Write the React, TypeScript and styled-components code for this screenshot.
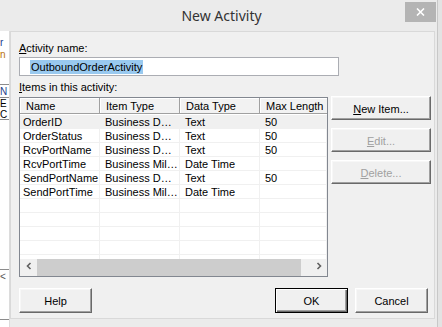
import React from 'react'
import styled, { createGlobalStyle } from 'styled-components'

const GlobalStyle = createGlobalStyle`
  html, body {
    margin: 0;
    padding: 0;
  }
  body {
    background: #ebebeb;
    font-family: "Liberation Sans", Arial, sans-serif;
    font-size: 11px;
    color: #000;
  }
  * {
    box-sizing: border-box;
  }
`

const Screen = styled.div`
  display: flex;
  width: 442px;
  height: 327px;
  overflow: hidden;
  background: #ebebeb;
`

const DialogColumn = styled.div`
  flex: 1;
  min-width: 0;
  display: flex;
  flex-direction: column;
`

// edge of the window lying behind the dialog
const OuterEdge = styled.div`
  flex: none;
  width: 5px;
  background: #e3e3e3;
  border-left: 1px solid #c8c8c8;
`

const TitleBar = styled.div`
  flex: none;
  height: 31px;
  display: grid;
  grid-template-columns: 1fr auto 1fr;
  align-items: center;
  padding: 0 1px 0 7px;
`

const Title = styled.div`
  grid-column: 2;
  font-family: "Noto Sans", "Open Sans", sans-serif;
  font-size: 14px;
  line-height: 19px;
  color: #333333;
`

const CloseButton = styled.div`
  grid-column: 3;
  justify-self: end;
  align-self: start;
  margin-top: 2px;
  width: 31px;
  height: 20px;
  background: #b4b4b4;
  display: flex;
  align-items: center;
  justify-content: center;
`

const Body = styled.div`
  flex: 1;
  min-height: 0;
  display: flex;
`

// the owner application peeking out at the left
const AppStrip = styled.div`
  flex: none;
  width: 10px;
  background: #ffffff;
  border-right: 1px solid #dcdcdc;
  display: flex;
  flex-direction: column;
  overflow: hidden;
`

const StripItem = styled.div<{ $h: number; $line?: boolean; $color?: string }>`
  flex: none;
  height: ${({ $h }) => $h}px;
  line-height: ${({ $h }) => $h}px;
  border-bottom: ${({ $line }) => ($line ? '1px solid #8c8c8c' : 'none')};
  color: ${({ $color }) => $color || '#000'};
  font-size: 10px;
  white-space: nowrap;
`

const Client = styled.div`
  flex: none;
  width: 425px;
  margin-bottom: 8px;
  border: 1px solid #d9d9d9;
  background: #f0f0f0;
  padding: 10px 3px 0 8px;
  display: flex;
  flex-direction: column;
`

const FieldLabel = styled.div<{ $top: number; $bottom: number }>`
  line-height: 13px;
  margin-top: ${({ $top }) => $top}px;
  margin-bottom: ${({ $bottom }) => $bottom}px;
`

const NameInput = styled.div`
  width: 320px;
  height: 19px;
  border: 1px solid #abadb3;
  background: #ffffff;
  padding-left: 10px;
  display: flex;
  align-items: center;
`

const Selection = styled.span`
  background: #99c9ef;
  line-height: 14px;
  padding: 0 1px;
`

const ItemsRow = styled.div`
  display: flex;
  align-items: flex-start;
`

const ListView = styled.div`
  width: 309px;
  height: 180px;
  border: 1px solid #828790;
  background: #ffffff;
  display: flex;
  flex-direction: column;
`

const columnTemplate = '80px 80px 80px 1fr'

const HeaderRow = styled.div`
  flex: none;
  height: 16px;
  display: grid;
  grid-template-columns: ${columnTemplate};
  background: #f2f2f2;
  border-bottom: 1px solid #a0a0a0;
`

const HeaderCell = styled.div`
  padding: 1px 0 0 6px;
  line-height: 14px;
  border-right: 1px solid #a0a0a0;
  box-shadow: inset 1px 0 #ffffff, inset 0 1px #ffffff;
  white-space: nowrap;
  overflow: hidden;
  &:last-child {
    border-right: none;
  }
`

const RowsArea = styled.div`
  flex: 1;
  min-height: 0;
  overflow: hidden;
  padding-top: 1px;
`

const Row = styled.div<{ $hot?: boolean }>`
  height: 14px;
  display: grid;
  grid-template-columns: ${columnTemplate};
  background: ${({ $hot }) => ($hot ? '#f0f0f0' : '#ffffff')};
`

const Cell = styled.div<{ $first?: boolean }>`
  padding: 1px 0 0 ${({ $first }) => ($first ? 3 : 5)}px;
  line-height: 12px;
  border-right: 1px solid #f0f0f0;
  border-bottom: 1px solid #f0f0f0;
  white-space: nowrap;
  overflow: hidden;
`

const HScroll = styled.div`
  flex: none;
  height: 17px;
  display: flex;
  background: #f0f0f0;
`

const ScrollArrow = styled.div`
  flex: none;
  width: 17px;
  display: flex;
  align-items: center;
  justify-content: center;
  padding-bottom: 3px;
`

const ScrollTrack = styled.div`
  flex: 1;
  display: flex;
`

const ScrollThumb = styled.div`
  width: 264px;
  background: #cdcdcd;
`

const SideButtons = styled.div`
  margin: -1px 0 0 3px;
  display: flex;
  flex-direction: column;
  gap: 8px;
`

const Button = styled.div<{ $w: number; $h: number; $default?: boolean; $disabled?: boolean }>`
  width: ${({ $w }) => $w}px;
  height: ${({ $h }) => $h}px;
  display: flex;
  align-items: center;
  justify-content: center;
  padding-top: 1px;
  background: #f0f0f0;
  color: ${({ $disabled }) => ($disabled ? '#a0a0a0' : '#000')};
  border: 1px solid;
  border-color: ${({ $default }) =>
    $default ? '#000 #000 #000 #000' : '#ffffff #696969 #696969 #ffffff'};
  box-shadow: ${({ $default }) =>
    $default
      ? 'inset 1px 1px #ffffff, inset -1px -1px #696969, inset -2px -2px #a0a0a0'
      : 'inset -1px -1px #a0a0a0, inset 1px 1px #f7f7f7'};
  white-space: nowrap;
`

const Footer = styled.div`
  margin-top: 11px;
  padding-right: 3px;
  display: flex;
  justify-content: space-between;
`

const FooterGroup = styled.div`
  display: flex;
  gap: 7px;
`

const Chevron = ({ dir }: { dir: 'left' | 'right' }) => (
  <svg width="8" height="8" viewBox="0 0 8 8">
    <polyline
      points={dir === 'left' ? '5.5,1 2.5,4 5.5,7' : '2.5,1 5.5,4 2.5,7'}
      fill="none"
      stroke="#606060"
      strokeWidth="1.6"
    />
  </svg>
)

const items = [
  ['OrderID', 'Business D…', 'Text', '50'],
  ['OrderStatus', 'Business D…', 'Text', '50'],
  ['RcvPortName', 'Business D…', 'Text', '50'],
  ['RcvPortTime', 'Business Mil…', 'Date Time', ''],
  ['SendPortName', 'Business D…', 'Text', '50'],
  ['SendPortTime', 'Business Mil…', 'Date Time', ''],
]

const emptyRows = 5

const stripItems: { h: number; text?: string; color?: string; line?: boolean }[] = [
  { h: 6 },
  { h: 12, text: 'r', color: '#1c3d8c' },
  { h: 12, text: 'n', color: '#b8700a' },
  { h: 24, line: true },
  { h: 13, text: 'N', color: '#1c3d8c', line: true },
  { h: 12, text: 'E' },
  { h: 10, text: 'C', line: true },
  { h: 140 },
  { h: 10, line: true },
  { h: 14, text: '<', color: '#555' },
  { h: 36, line: true },
]

export default function App() {
  return (
    <>
      <GlobalStyle />
      <Screen>
        <DialogColumn>
          <TitleBar>
            <Title>New Activity</Title>
            <CloseButton>
              <svg width="9" height="8" viewBox="0 0 9 8">
                <path d="M1 0.5 L8 7.5 M8 0.5 L1 7.5" stroke="#ffffff" strokeWidth="1.6" />
              </svg>
            </CloseButton>
          </TitleBar>
          <Body>
            <AppStrip>
              {stripItems.map((s, i) => (
                <StripItem key={i} $h={s.h} $line={s.line} $color={s.color}>
                  {s.text}
                </StripItem>
              ))}
            </AppStrip>
            <Client>
              <FieldLabel $top={0} $bottom={2}>
                <u>A</u>ctivity name:
              </FieldLabel>
              <NameInput>
                <Selection>OutboundOrderActivity</Selection>
              </NameInput>
              <FieldLabel $top={5} $bottom={3}>
                <u>I</u>tems in this activity:
              </FieldLabel>
              <ItemsRow>
                <ListView>
                  <HeaderRow>
                    <HeaderCell>Name</HeaderCell>
                    <HeaderCell>Item Type</HeaderCell>
                    <HeaderCell>Data Type</HeaderCell>
                    <HeaderCell>Max Length</HeaderCell>
                  </HeaderRow>
                  <RowsArea>
                    {items.map((r, i) => (
                      <Row key={r[0]} $hot={i === 0}>
                        {r.map((c, j) => (
                          <Cell key={j} $first={j === 0}>
                            {c}
                          </Cell>
                        ))}
                      </Row>
                    ))}
                    {Array.from({ length: emptyRows }).map((_, i) => (
                      <Row key={'e' + i}>
                        <Cell $first />
                        <Cell />
                        <Cell />
                        <Cell />
                      </Row>
                    ))}
                  </RowsArea>
                  <HScroll>
                    <ScrollArrow>
                      <Chevron dir="left" />
                    </ScrollArrow>
                    <ScrollTrack>
                      <ScrollThumb />
                    </ScrollTrack>
                    <ScrollArrow>
                      <Chevron dir="right" />
                    </ScrollArrow>
                  </HScroll>
                </ListView>
                <SideButtons>
                  <Button $w={100} $h={24}>
                    <span>
                      <u>N</u>ew Item...
                    </span>
                  </Button>
                  <Button $w={100} $h={24} $disabled>
                    <span>
                      <u>E</u>dit...
                    </span>
                  </Button>
                  <Button $w={100} $h={24} $disabled>
                    <span>
                      <u>D</u>elete...
                    </span>
                  </Button>
                </SideButtons>
              </ItemsRow>
              <Footer>
                <Button $w={73} $h={25}>Help</Button>
                <FooterGroup>
                  <Button $w={73} $h={25} $default>
                    OK
                  </Button>
                  <Button $w={73} $h={25}>Cancel</Button>
                </FooterGroup>
              </Footer>
            </Client>
          </Body>
        </DialogColumn>
        <OuterEdge />
      </Screen>
    </>
  )
}
